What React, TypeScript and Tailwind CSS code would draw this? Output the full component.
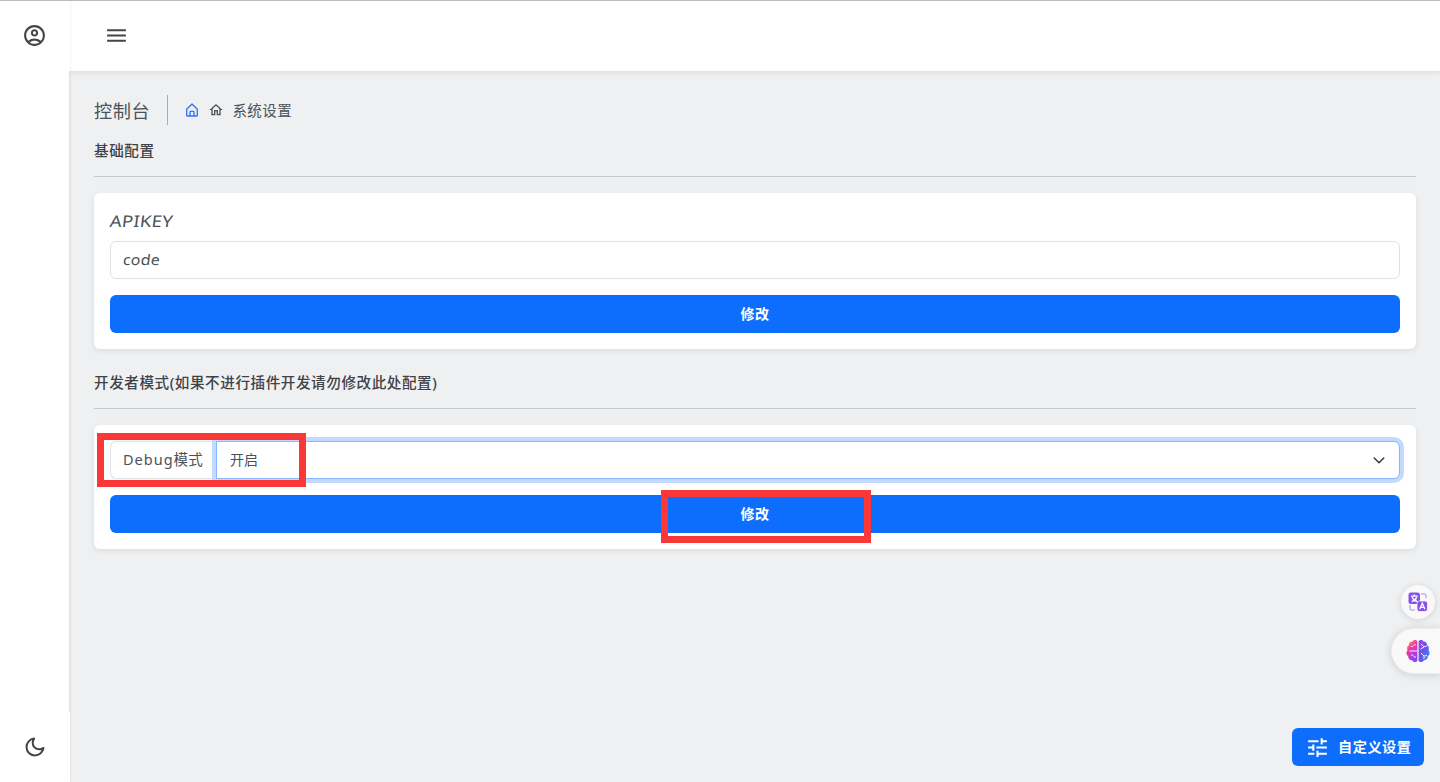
import { BiHomeAlt } from 'react-icons/bi';
import { MdMenu, MdOutlineAccountCircle, MdOutlineHome, MdTune } from 'react-icons/md';
import type { ReactNode } from 'react';

function SectionTitle({ children }: { children: ReactNode }) {
  return (
    <h6 className="flex h-[42px] items-start border-b border-[#c7c8ca] pt-[6px] text-[14.6px] leading-[18px] font-medium tracking-[0.55px] whitespace-nowrap text-[#3f4246]">
      {children}
    </h6>
  );
}

function Card({ children }: { children: ReactNode }) {
  return (
    <section className="rounded-md bg-white p-4 shadow-[0_2px_6px_rgba(0,0,0,0.08)]">{children}</section>
  );
}

function SaveButton() {
  return (
    <button className="mt-4 flex h-[38px] w-full items-center justify-center rounded-md bg-[#0d6efd] pb-px text-[14px] font-bold tracking-[0.5px] text-white">
      修改
    </button>
  );
}

function MoonIcon() {
  return (
    <svg viewBox="0 0 24 24" className="mr-px size-6" fill="none" stroke="#434548" strokeWidth="2" strokeLinejoin="round">
      <path d="M11.200 3.500C6.800 4 3.500 7.700 3.500 12.100c0 4.600 3.700 8.300 8.300 8.300 4.500 0 8.200-3.200 8.700-7.500-1.200.9-2.800 1.400-4.200 1.400-3.700 0-6.600-2.800-6.600-6.300 0-1.700.4-3.200 1.500-4.500z" />
    </svg>
  );
}

function TranslateIcon() {
  return (
    <svg viewBox="0 0 20 20" className="size-5">
      <path d="M13 2h3a2 2 0 0 1 2 2v2M2 13v3a2 2 0 0 0 2 2h3" fill="none" stroke="#c5aef8" strokeWidth="1.6" />
      <rect x="0.500" y="0.500" width="11.500" height="11.500" rx="2.5" fill="#8751e8" />
      <rect x="9" y="9" width="10.5" height="10.5" rx="2.5" fill="#8751e8" stroke="#f8f8fa" strokeWidth="0.8" />
      <path d="M3 4.200h6.800M6.400 2.600v1.600M4.300 5.200c.7 2 2.300 3.600 4.900 4.300M8.600 5.200C8 7.300 6.400 8.800 3.700 9.600" fill="none" stroke="#fff" strokeWidth="1.300" />
      <path d="m11.700 17.200 2.600-6 2.600 6M12.600 15.400h3.400" fill="none" stroke="#fff" strokeWidth="1.300" />
    </svg>
  );
}

function BrainIcon() {
  return (
    <svg viewBox="0 0 24 24" className="size-6">
      <defs>
        <linearGradient id="brainLeft" x1="0" y1="0" x2="0.5" y2="1">
          <stop offset="0.12" stopColor="#ff9b2f" />
          <stop offset="0.45" stopColor="#ee38aa" />
          <stop offset="1" stopColor="#8a43f5" />
        </linearGradient>
        <linearGradient id="brainRight" x1="0" y1="0" x2="1" y2="1">
          <stop offset="0" stopColor="#9a45e8" />
          <stop offset="0.5" stopColor="#6257ed" />
          <stop offset="1" stopColor="#299df7" />
        </linearGradient>
      </defs>
      <path d="M11.400 2.500C10.500.7 7.500.6 6.500 2.500 4 2.300 2.700 4.200 3 6.200 1 7.200.6 9.500 1.600 11-.3 13 .1 16 2.100 17c0 2.500 1.600 4.300 3.900 4.200 1.600 2.500 4.700 2.300 5.400.2z" fill="url(#brainLeft)" />
      <path d="M12.600 2.500c.9-1.800 3.900-1.900 4.900 0 2.500-.2 3.800 1.700 3.500 3.700 2 1 2.400 3.300 1.400 4.800 1.900 2 1.500 5-.5 6 0 2.500-1.600 4.300-3.900 4.200-1.600 2.500-4.700 2.300-5.400.2z" fill="url(#brainRight)" />
      <path d="M3.400 12h8M5 7.500c3 .8 1.600-2 5-1.800M5 16c2.500-.7 2 2.300 5 2.200M15 5l3 2.700 3-.7M14.500 10l3.500-2M15 14l3 3 3-.5M18 17v3" fill="none" stroke="#f9eaff" strokeWidth="1" />
    </svg>
  );
}

export default function App() {
  return (
    <div className="relative flex h-[782px] w-full overflow-hidden bg-[#eff0f2] font-['Noto_Sans','Noto_Sans_CJK_SC',sans-serif] text-[#4c5258]">
      <aside className="z-10 flex w-[70px] shrink-0 flex-col justify-between border-t border-[#bdbdbd] bg-white shadow-[0_0_2px_rgba(0,0,0,0.12)]">
        <button className="flex h-[70px] items-center justify-center pr-px" aria-label="账户">
          <MdOutlineAccountCircle className="mb-px size-[25px]" color="#434548" />
        </button>
        <div className="w-full flex-1 border-r border-[#dfe1e3]" />
        <button className="flex h-[70px] items-center justify-center" aria-label="夜间模式">
          <MoonIcon />
        </button>
      </aside>

      <div className="flex min-w-0 flex-1 flex-col">
        <header className="flex h-[71px] shrink-0 items-center border-t border-[#bdbdbd] bg-white pl-[34px] shadow-[0_2px_5px_rgba(0,0,0,0.08)]">
          <MdMenu className="mb-px size-[25px]" color="#434548" />
        </header>

        <main className="flex flex-col px-6 pt-6">
          <div className="flex h-[30px] items-center">
            <h5 className="pt-[3px] text-[18.200px] font-normal tracking-[0.6px] whitespace-nowrap">控制台</h5>
            <div className="ml-[17px] h-full w-px bg-[#aaacae]" />
            <nav className="flex items-center pt-px pl-4">
              <BiHomeAlt className="mb-px size-4" color="#2f72fb" />
              <MdOutlineHome className="mb-px ml-[8px] size-4" />
              <span className="ml-[8px] text-[14.500px] tracking-[0.5px]">系统设置</span>
            </nav>
          </div>

          <div className="mt-[10px] mb-4">
            <SectionTitle>基础配置</SectionTitle>
          </div>
          <Card>
            <label className="block h-8 text-base leading-6">
              <span className="inline-block origin-left scale-x-[1.16] -skew-x-6 tracking-[0.2px]">APIKEY</span>
            </label>
            <div className="flex h-[38px] w-full items-center rounded-md border border-[#dee2e6] bg-white px-3 text-[14.500px]">
              <span className="inline-block origin-left scale-x-[1.1] -skew-x-6 tracking-[0.2px]">code</span>
            </div>
            <SaveButton />
          </Card>

          <div className="mt-[18px] mb-4">
            <SectionTitle>开发者模式(如果不进行插件开发请勿修改此处配置)</SectionTitle>
          </div>
          <Card>
            <div className="flex h-[38px]">
              <label className="flex w-[106px] shrink-0 items-center rounded-l-md border border-r-0 border-[#dee2e6] pl-3 text-[14.500px] whitespace-nowrap">
                <span className="tracking-[1px]">Debug</span>
                <span className="tracking-[0.3px]">模式</span>
              </label>
              <button className="flex min-w-0 flex-1 items-center justify-between rounded-r-md border border-[#86b7fe] bg-white pr-3 pb-px pl-[13px] text-[14px] shadow-[0_0_0_4px_#c2daff]">
                <span>开启</span>
                <svg viewBox="0 0 16 16" className="size-4" fill="none" stroke="#343a40" strokeWidth="1.5" strokeLinecap="round" strokeLinejoin="round">
                  <path d="m3.200 6 4.800 4.800L12.800 6" />
                </svg>
              </button>
            </div>
            <SaveButton />
          </Card>
        </main>
      </div>

      <div className="absolute top-[433px] left-[97px] z-20 h-[54px] w-[209px] border-7 border-[#fb3838]" />
      <div className="absolute top-[490px] left-[661px] z-20 h-[53px] w-[210px] border-7 border-[#fb3838]" />

      <button className="absolute top-[585px] right-[5px] flex size-[34px] items-center justify-center rounded-full bg-[#f9f9fa] shadow-[0_1px_7px_rgba(0,0,0,0.13)]" aria-label="翻译">
        <TranslateIcon />
      </button>
      <button className="absolute top-[628px] right-0 flex h-[46px] w-[49px] items-center rounded-l-full border border-r-0 border-[#eeeef1] bg-[#f9f9fa] pl-[14px] shadow-[0_1px_8px_rgba(0,0,0,0.15)]" aria-label="助手">
        <BrainIcon />
      </button>
      <button className="absolute right-4 bottom-4 flex h-[38px] w-[132px] items-center rounded-md bg-[#0d6efd] pl-[13px] text-white">
        <MdTune className="size-[25px]" />
        <span className="ml-2 text-[14.200px] font-bold tracking-[0.5px] whitespace-nowrap">自定义设置</span>
      </button>
    </div>
  );
}
